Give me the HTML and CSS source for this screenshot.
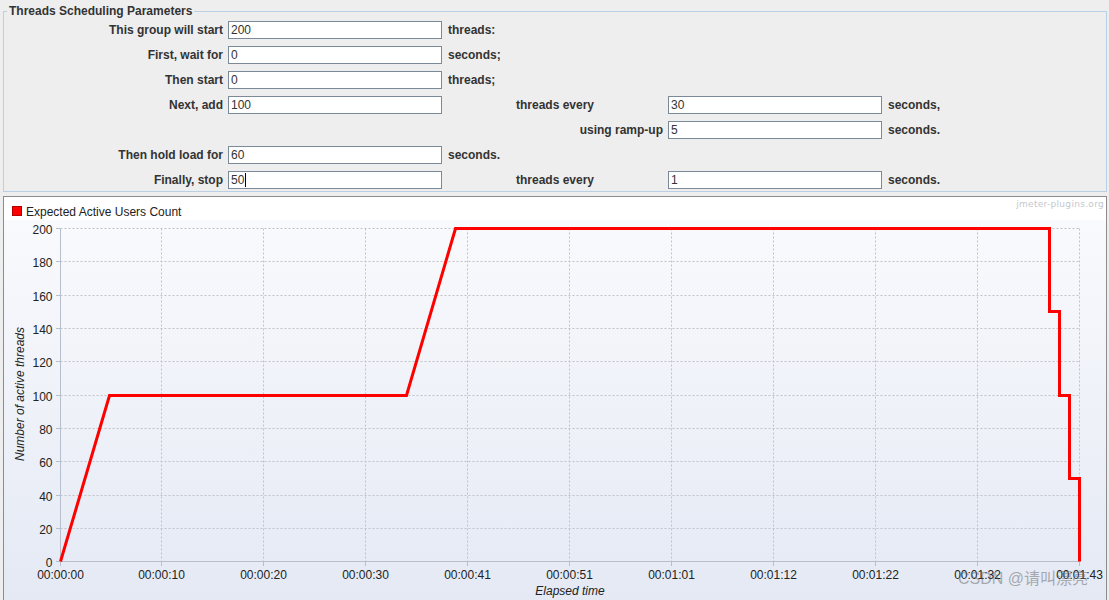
FILE: index.html
```html
<!DOCTYPE html>
<html lang="en">
<head>
<meta charset="utf-8">
<title>Threads Scheduling Parameters</title>
<link rel="stylesheet" href="styles.css">
</head>
<body>
<div class="window">
  <div class="group">
    <span class="group-title">Threads Scheduling Parameters</span>
    <div class="form-grid">
      <span class="lbl">This group will start</span>
      <div class="field">200</div>
      <span class="unit">threads:</span>
      <span class="fill-row"></span>

      <span class="lbl">First, wait for</span>
      <div class="field">0</div>
      <span class="unit">seconds;</span>
      <span class="fill-row"></span>

      <span class="lbl">Then start</span>
      <div class="field">0</div>
      <span class="unit">threads;</span>
      <span class="fill-row"></span>

      <span class="lbl">Next, add</span>
      <div class="field">100</div>
      <span class="mid">threads every</span>
      <div class="field">30</div>
      <span class="unit">seconds,</span>

      <span class="lbl c3">using ramp-up</span>
      <div class="field">5</div>
      <span class="unit">seconds.</span>

      <span class="lbl">Then hold load for</span>
      <div class="field">60</div>
      <span class="unit">seconds.</span>
      <span class="fill-row"></span>

      <span class="lbl">Finally, stop</span>
      <div class="field">50<span class="caret"></span></div>
      <span class="mid">threads every</span>
      <div class="field">1</div>
      <span class="unit">seconds.</span>
    </div>
  </div>

  <div class="chart-panel">
    <div class="chart-head">
      <div class="legend"><span class="swatch"></span><span>Expected Active Users Count</span></div>
      <span class="brand">jmeter-plugins.org</span>
    </div>
    <div class="plot">
      <svg width="1102" height="381" xmlns="http://www.w3.org/2000/svg">
        <g class="grid">
          <line x1="157.5" y1="8.5" x2="157.5" y2="341.5"/>
          <line x1="259.5" y1="8.5" x2="259.5" y2="341.5"/>
          <line x1="361.5" y1="8.5" x2="361.5" y2="341.5"/>
          <line x1="463.5" y1="8.5" x2="463.5" y2="341.5"/>
          <line x1="565.5" y1="8.5" x2="565.5" y2="341.5"/>
          <line x1="667.5" y1="8.5" x2="667.5" y2="341.5"/>
          <line x1="769.5" y1="8.5" x2="769.5" y2="341.5"/>
          <line x1="871.5" y1="8.5" x2="871.5" y2="341.5"/>
          <line x1="973.5" y1="8.5" x2="973.5" y2="341.5"/>
          <line x1="1075.5" y1="8.5" x2="1075.5" y2="341.5"/>
          <line x1="56.5" y1="308.5" x2="1075.5" y2="308.5"/>
          <line x1="56.5" y1="275.5" x2="1075.5" y2="275.5"/>
          <line x1="56.5" y1="241.5" x2="1075.5" y2="241.5"/>
          <line x1="56.5" y1="208.5" x2="1075.5" y2="208.5"/>
          <line x1="56.5" y1="175.5" x2="1075.5" y2="175.5"/>
          <line x1="56.5" y1="141.5" x2="1075.5" y2="141.5"/>
          <line x1="56.5" y1="108.5" x2="1075.5" y2="108.5"/>
          <line x1="56.5" y1="75.5" x2="1075.5" y2="75.5"/>
          <line x1="56.5" y1="41.5" x2="1075.5" y2="41.5"/>
          <line x1="56.5" y1="8.5" x2="1075.5" y2="8.5"/>
        </g>
        <g class="axis">
          <line x1="56.5" y1="8.5" x2="56.5" y2="341.5"/>
          <line x1="56.5" y1="341.5" x2="1076" y2="341.5"/>
          <line x1="52" y1="341.5" x2="56" y2="341.5"/>
          <line x1="52" y1="308.5" x2="56" y2="308.5"/>
          <line x1="52" y1="275.5" x2="56" y2="275.5"/>
          <line x1="52" y1="241.5" x2="56" y2="241.5"/>
          <line x1="52" y1="208.5" x2="56" y2="208.5"/>
          <line x1="52" y1="175.5" x2="56" y2="175.5"/>
          <line x1="52" y1="141.5" x2="56" y2="141.5"/>
          <line x1="52" y1="108.5" x2="56" y2="108.5"/>
          <line x1="52" y1="75.5" x2="56" y2="75.5"/>
          <line x1="52" y1="41.5" x2="56" y2="41.5"/>
          <line x1="52" y1="8.5" x2="56" y2="8.5"/>
          <line x1="56.5" y1="342" x2="56.5" y2="346"/>
          <line x1="157.5" y1="342" x2="157.5" y2="346"/>
          <line x1="259.5" y1="342" x2="259.5" y2="346"/>
          <line x1="361.5" y1="342" x2="361.5" y2="346"/>
          <line x1="463.5" y1="342" x2="463.5" y2="346"/>
          <line x1="565.5" y1="342" x2="565.5" y2="346"/>
          <line x1="667.5" y1="342" x2="667.5" y2="346"/>
          <line x1="769.5" y1="342" x2="769.5" y2="346"/>
          <line x1="871.5" y1="342" x2="871.5" y2="346"/>
          <line x1="973.5" y1="342" x2="973.5" y2="346"/>
          <line x1="1075.5" y1="342" x2="1075.5" y2="346"/>
        </g>
        <g class="ylabels">
          <text x="48.5" y="346.5">0</text>
          <text x="48.5" y="313.5">20</text>
          <text x="48.5" y="280.5">40</text>
          <text x="48.5" y="246.5">60</text>
          <text x="48.5" y="213.5">80</text>
          <text x="48.5" y="180.5">100</text>
          <text x="48.5" y="146.5">120</text>
          <text x="48.5" y="113.5">140</text>
          <text x="48.5" y="80.5">160</text>
          <text x="48.5" y="46.5">180</text>
          <text x="48.5" y="13.5">200</text>
        </g>
        <g class="xlabels">
          <text x="56.5" y="358.5">00:00:00</text>
          <text x="157.5" y="358.5">00:00:10</text>
          <text x="259.5" y="358.5">00:00:20</text>
          <text x="361.5" y="358.5">00:00:30</text>
          <text x="463.5" y="358.5">00:00:41</text>
          <text x="565.5" y="358.5">00:00:51</text>
          <text x="667.5" y="358.5">00:01:01</text>
          <text x="769.5" y="358.5">00:01:12</text>
          <text x="871.5" y="358.5">00:01:22</text>
          <text x="973.5" y="358.5">00:01:32</text>
          <text x="1075.5" y="358.5">00:01:43</text>
        </g>
        <text class="axis-title" x="566" y="375">Elapsed time</text>
        <text class="axis-title" transform="translate(19.5 174) rotate(-90)" x="0" y="0">Number of active threads</text>
        <polyline class="series" points="56.5,341.5 105.5,175.5 402.5,175.5 451.5,8.5 1045.5,8.5 1045.5,91.5 1055.5,91.5 1055.5,175.5 1065.5,175.5 1065.5,258.5 1075.5,258.5 1075.5,341.5"/>
      </svg>
    </div>
    <span class="csdn">CSDN @请叫漂亮</span>
  </div>
</div>
</body>
</html>
```

FILE: styles.css
```css
html, body {
  margin: 0;
  padding: 0;
}

body {
  width: 1109px;
  height: 600px;
  overflow: hidden;
  background: #eeeeee;
  font-family: "Liberation Sans", Arial, sans-serif;
  font-size: 12px;
  color: #333333;
}

.window {
  padding: 11px 2px 0 3px;
}

/* ---------- parameters group ---------- */
.group {
  position: relative;
  border: 1px solid #b8cfe5;
  padding: 9px 0 2px 0;
}

.group-title {
  position: absolute;
  left: 3px;
  top: -8px;
  padding: 0 2px;
  background: #eeeeee;
  font-weight: bold;
  line-height: 14px;
  color: #333333;
}

.form-grid {
  display: grid;
  grid-template-columns: 219px 214px 216px 214px 1fr;
  grid-auto-rows: 18px;
  column-gap: 5px;
  row-gap: 7px;
  align-items: center;
}

.lbl {
  grid-column: 1;
  justify-self: end;
  font-weight: bold;
  line-height: 18px;
  white-space: nowrap;
}

.lbl.c3 {
  grid-column: 3;
}

.unit {
  font-weight: bold;
  line-height: 18px;
  margin-left: 1px;
  white-space: nowrap;
}

.mid {
  justify-self: center;
  font-weight: bold;
  line-height: 18px;
  white-space: nowrap;
}

.fill-row {
  grid-column: 4 / 6;
}

.field {
  box-sizing: border-box;
  height: 18px;
  border: 1px solid #7a8a99;
  background: #ffffff;
  padding: 1px 2px 0 2px;
  line-height: 15px;
  color: #333333;
  white-space: nowrap;
  overflow: hidden;
}

.caret {
  display: inline-block;
  width: 1px;
  height: 14px;
  margin-left: 1px;
  background: #000000;
  vertical-align: -3px;
}

/* ---------- chart ---------- */
.chart-panel {
  position: relative;
  box-sizing: border-box;
  margin-top: 4px;
  height: 406px;
  border: 1px solid #8c8c8c;
  background: #ffffff;
  display: flex;
  flex-direction: column;
}

.chart-head {
  height: 23px;
  display: flex;
  align-items: flex-start;
  padding: 0 2px 0 8px;
}

.legend {
  display: flex;
  align-items: flex-start;
  gap: 4px;
  margin-top: 8px;
  line-height: 14px;
  color: #222222;
}

.swatch {
  box-sizing: border-box;
  width: 10px;
  height: 10px;
  margin-top: 1px;
  background: #ff0000;
  border: 1px solid #b00000;
}

.brand {
  margin-left: auto;
  margin-top: 2px;
  font-family: "DejaVu Sans", sans-serif;
  font-size: 9px;
  line-height: 11px;
  letter-spacing: 0.3px;
  color: #c3c7cf;
}

.plot {
  flex: 1;
  background: linear-gradient(#f9fafd, #e4e9f4);
}

.plot svg {
  display: block;
}

.grid line {
  stroke: #c2c2c6;
  stroke-width: 1;
  stroke-dasharray: 2 2;
}

.axis line {
  stroke: #b7bfcc;
  stroke-width: 1;
}

.ylabels text {
  font-family: "Liberation Sans", Arial, sans-serif;
  font-size: 12px;
  fill: #222222;
  text-anchor: end;
}

.xlabels text {
  font-family: "Liberation Sans", Arial, sans-serif;
  font-size: 12px;
  fill: #222222;
  text-anchor: middle;
}

.axis-title {
  font-family: "Liberation Sans", Arial, sans-serif;
  font-size: 12px;
  font-style: italic;
  fill: #222222;
  text-anchor: middle;
}

.series {
  fill: none;
  stroke: #ff0000;
  stroke-width: 3;
  stroke-linejoin: miter;
}

.csdn {
  position: absolute;
  left: 954px;
  top: 372px;
  font-family: "Liberation Sans", "Noto Sans CJK SC", sans-serif;
  font-size: 16px;
  line-height: 20px;
  color: rgba(100, 100, 100, 0.5);
  white-space: nowrap;
}
```
